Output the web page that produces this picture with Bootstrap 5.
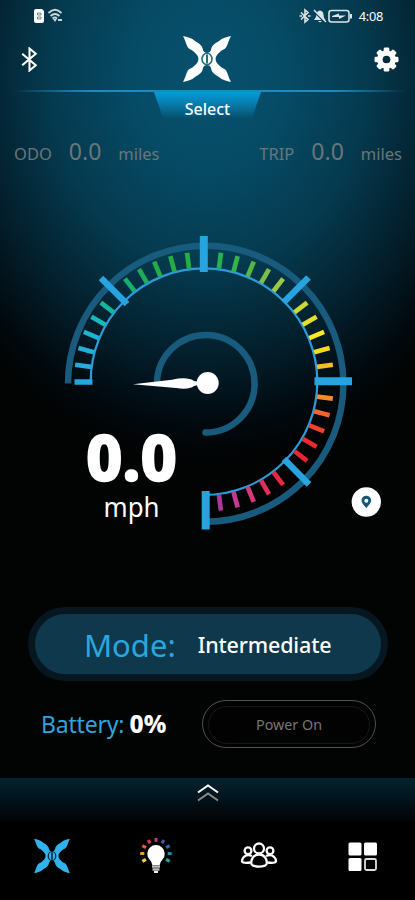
<!DOCTYPE html>
<html lang="en">
<head>
<meta charset="utf-8">
<meta name="viewport" content="width=device-width, initial-scale=1">
<title>Ride dashboard</title>
<link href="https://cdn.jsdelivr.net/npm/bootstrap@5.3.0/dist/css/bootstrap.min.css" rel="stylesheet">
<style>
body{background:#000;font-family:"Noto Sans","Open Sans",sans-serif;color:#fff}
.screen{width:415px;height:900px;background:radial-gradient(ellipse 315px 385px at 208px 75px,#07506d 0,#064c67 22%,#053a4f 50%,#031d29 75%,#010a0f 90%,#020303 100%)}
.screen svg{display:block;flex:none}
.status-row{height:32px;padding:0 32px 0 33px}
.clock{font-size:12.8px;letter-spacing:-.3px;line-height:32px}
.brand-row{height:58px;padding:0 16px 4px 20px}
.rule-line{height:2px;background:linear-gradient(90deg,transparent 3%,#1a8cc0 22%,#1a8cc0 80%,transparent 98%)}
.select-tab{width:107px;height:28px;line-height:34px;font-size:16px;font-weight:500;clip-path:polygon(0 0,100% 0,91% 100%,9% 100%);background:linear-gradient(#079bd8,#0782b6 35%,#065270 90%,#064c67)}
.trip-row{height:50px;padding:16px 13px 0 14px;color:#697779;line-height:32px}
.trip-group{gap:17px}
.unit-text{font-size:16.5px;line-height:35px}
.amount{font-size:23px;line-height:31px}
.gauge-wrap{height:437px}
.mode-pill{width:360px;height:74px;margin-left:28px;border:7px solid #07171f;border-radius:37px;background:#0f384d;padding-left:49px;gap:22px}
.mode-label{font-size:31px;color:#2ba6df;line-height:62px}
.mode-value{font-size:21.5px;line-height:61px;font-weight:500;letter-spacing:-.15px}
.power-row{height:48px;margin-top:19px;padding:0 39px 0 41px}
.batt-label{font-size:23px;color:#2ba6df;letter-spacing:-.2px}
.batt-value{font-size:24.5px;font-weight:800;letter-spacing:.2px;margin-left:1px}
.power-btn{width:174px;height:48px;border:1.5px solid #505050;border-radius:24px;padding:5px;background:#020202}
.power-inner{border:1px solid #181818;border-radius:19px;color:#777;font-size:14.3px;line-height:36px}
.drawer{height:44px;margin-top:30px;background:linear-gradient(#04222f,#03141d 45%,#030b10 70%,#030303)}
.tabs{height:78px;background:#000}
</style>
</head>
<body>
<svg width="0" height="0" class="d-none">
<symbol id="logo" viewBox="0 0 48 46"><g id="half" fill="currentColor"><path id="arm" d="M0 0C4 1 9 2 12 5C16 7.500 19.500 9.500 20 14Q21 17 24.200 17V23.200H15.500Q15.500 21 14 19C12 16.500 10 14.500 7 13.200C3.500 12 3 5 0 0Z"/><use href="#arm" transform="translate(48 0) scale(-1 1)"/></g><use href="#half" transform="translate(0 46) scale(1 -1)"/></symbol>
<symbol id="bt" viewBox="0 0 16 24"><path d="M1 6.500L14 17.500L8 22.500V1.500L14 6.500L1 17.500" fill="none" stroke="currentColor" stroke-width="2"/></symbol>
</svg>
<main class="screen d-flex flex-column overflow-hidden">
<div class="status-row d-flex align-items-center justify-content-between">
<svg width="32" height="16" viewBox="0 0 32 16"><path d="M3 1H9L11 3V13Q11 15 9 15H3Q1 15 1 13V3Q1 1 3 1Z" fill="#fff"/><path d="M4.500 5H8V7H4.500ZM4.500 9H8V11H4.500Z" fill="none" stroke="#6c8994"/><g fill="none" stroke="#c6d7dc" stroke-width="1.800"><path d="M15.500 5Q22 -1.500 28.500 5M17.500 8Q22 4 26.500 8M19.500 10.500Q22 8.500 24 10.500"/></g><path d="M20 11L24 11L22 14ZM25 11H29V13H25Z" fill="#c6d7dc"/></svg>
<div class="d-flex align-items-center">
<svg width="56" height="16" viewBox="0 0 56 16"><g fill="none" stroke="#dbe5e8" stroke-width="1.600"><path d="M2 4.500L9 11.500L6 14V2L9 4.500L2 11.500M.5 8H3M9 8H11.500"/><rect x="30" y="2.500" width="20" height="11.500" rx="2.500"/></g><path d="M15 12Q17.500 9.500 17.500 6Q18.500 2.500 21 2.500Q24.500 3 24.500 7Q24.500 10 26.500 12H15ZM19 13H23Q21 15.500 19 13Z" fill="#dbe5e8"/><path d="M15.500 4L26.500 15" stroke="#063b4f" stroke-width="1.500"/><path d="M15 2L27 14" stroke="#dbe5e8" stroke-width="1.500"/><path d="M33 8L40 5.500V7.500H47L40 11V9H33Z" fill="#dbe5e8"/><path d="M52 6V10.500" stroke="#dbe5e8" stroke-width="2"/></svg>
<span class="clock ms-1">4:08</span></div>
</div>
<div class="brand-row d-flex align-items-center justify-content-between">
<svg width="19" height="25"><use href="#bt"/></svg>
<svg width="50" height="48" viewBox="-1 -1 50 48"><use href="#logo" width="48" height="46"/><ellipse cx="24" cy="23" rx="5" ry="5.800" fill="#fff" stroke="#286a82" stroke-width="1.600"/><path d="M24 18.500V27.500" stroke="#286a82" stroke-width="2"/></svg>
<svg width="25" height="25" viewBox="-12 -12 24 24"><g fill="#fff"><circle r="9"/><g id="teeth"><rect x="-2.700" y="-11.500" width="5.400" height="23" rx="1.300"/><rect x="-11.500" y="-2.700" width="23" height="5.400" rx="1.300"/></g><use href="#teeth" transform="rotate(45)"/></g><circle r="3.700" fill="#052b3b"/></svg>
</div>
<div class="rule-line"></div>
<div class="select-tab align-self-center text-center">Select</div>
<div class="trip-row d-flex justify-content-between">
<div class="trip-group d-flex"><span class="unit-text">ODO</span><span class="amount">0.0</span><span class="unit-text">miles</span></div>
<div class="trip-group d-flex"><span class="unit-text">TRIP</span><span class="amount">0.0</span><span class="unit-text">miles</span></div>
</div>
<div class="gauge-wrap">
<svg width="415" height="437" viewBox="0 170 415 437">
<g fill="none" stroke="#195b7c"><path d="M68 383.500A137.700 138 0 1 1 205.500 521.700" stroke-width="6.500"/><path d="M157 383A48.800 48.800 0 1 1 205.500 432.500" stroke-width="6.500"/><circle cx="205.500" cy="432.500" r="3.200" fill="#195b7c" stroke="none"/></g>
<path d="M90.700 381.700A113.300 113.300 0 1 1 204 495" fill="none" stroke="#2a9cda" stroke-width="2.200"/>
<g id="ticks" stroke-width="4.700"></g>
<g stroke="#27a3df" stroke-width="8"><path d="M203.800 236V272M314.500 381.300H352"/><path d="M205.700 491V529.500"/><path d="M101 278L127 304M308.500 277.500L283.500 302.500M284 459L309 484.500" stroke-width="6.500"/><path d="M74.500 382H92.500" stroke-width="5.500"/></g>
<path d="M133 384.300L172 379.700Q188 376.500 194 381L207 383L194 386Q189 390 176 388Z" fill="#fff"/><circle cx="207.700" cy="383" r="11" fill="#fff"/>
<g fill="#fff"><text x="131.500" y="480.500" text-anchor="middle" font-size="64.500" font-weight="800" textLength="91" lengthAdjust="spacingAndGlyphs" stroke="#fff" stroke-width="1.600">0.0</text><text x="131.500" y="516.500" text-anchor="middle" font-size="27.500" textLength="56" lengthAdjust="spacingAndGlyphs">mph</text></g>
<circle cx="366.300" cy="502" r="14.700" fill="#fff"/><path d="M366.300 508Q361.500 503 361.500 500.500A4.800 4.800 0 0 1 371.100 500.500Q371 503 366.300 508Z" fill="#145579"/><circle cx="366.300" cy="500.800" r="2" fill="#fff"/>
</svg>
</div>
<div class="mode-pill d-flex"><span class="mode-label">Mode:</span><span class="mode-value">Intermediate</span></div>
<div class="power-row d-flex align-items-center justify-content-between"><div class="text-nowrap"><span class="batt-label">Battery:</span> <span class="batt-value">0%</span></div>
<div class="power-btn"><div class="power-inner text-center">Power On</div></div></div>
<div class="drawer d-flex justify-content-center"><svg width="24" height="30" viewBox="0 0 24 30" fill="none" stroke-width="2"><path d="M2 14.500L12 7.500L22 14.500" stroke="#fff"/><path d="M2 22.500L12 15.500L22 22.500" stroke="#8a8a8a"/></svg></div>
<nav class="tabs row g-0 row-cols-4">
<div class="col d-flex justify-content-center pt-3"><svg width="36" height="36" viewBox="0 0 48 46" color="#31b2ea"><use href="#logo" width="48" height="46"/><ellipse cx="24" cy="23" rx="5" ry="6" fill="#31b2ea" stroke="#04222f" stroke-width="1.600"/><path d="M24 18V28" stroke="#04222f" stroke-width="2"/></svg></div>
<div class="col d-flex justify-content-center pt-3"><svg width="36" height="38" viewBox="0 0 36 38"><path d="M14.300 27Q14 24 11.500 21.500A8.700 8.700 0 1 1 24.500 21.500Q22 24 21.700 27Z" fill="#fff"/><path d="M14 28.500H22M14.500 31.500H21.500" stroke="#bbb" stroke-width="2.400"/><path d="M16 34H20" stroke="#eee" stroke-width="2"/><g id="rays" stroke-width="3"></g></svg></div>
<div class="col d-flex justify-content-center pt-3"><svg width="38" height="36" viewBox="0 0 38 36" fill="none" stroke="#fff" stroke-width="2.300"><circle cx="19" cy="10.500" r="5"/><path d="M19 16.500Q14 16.500 12 21Q10 26.500 13 27.700Q19 29.500 25 27.700Q28 26.500 26 21Q24 16.500 19 16.500Z"/><circle cx="8" cy="12.800" r="3.400"/><circle cx="30" cy="12.800" r="3.400"/><path d="M12 18Q9 16.500 6 17.500Q2 19.500 2 23.500Q3 25.500 10.500 24.500M26 18Q29 16.500 32 17.500Q36 19.500 36 23.500Q35 25.500 27.500 24.500"/></svg></div>
<div class="col d-flex justify-content-center pt-3"><svg width="32" height="36" viewBox="0 0 32 36" fill="#fff"><rect x="1.500" y="4.500" width="13" height="13" rx="1.500"/><rect x="17" y="4.500" width="13" height="13" rx="1.500"/><rect x="1.500" y="20" width="13" height="13" rx="1.500"/><rect x="18" y="21" width="11" height="11" rx="1.500" fill="none" stroke="#ddd" stroke-width="1.800"/></svg></div>
</nav>
</main>
<script src="https://cdn.jsdelivr.net/npm/bootstrap@5.3.0/dist/js/bootstrap.bundle.min.js"></script>
<script>
function radial(id,cx,cy,r1,r2,list){
  let s='';
  list.forEach(([deg,color])=>{const a=deg*Math.PI/180,c=Math.cos(a),n=Math.sin(a);
    s+=`<path stroke="${color}" d="M${cx+c*r1} ${cy+n*r1}L${cx+c*r2} ${cy+n*r2}"/>`});
  document.getElementById(id).innerHTML=s;
}
const colors=['#27a9df','#20afd8','#1cb4cf','#19b8bd','#16b69e',null,'#17ae70','#1bae5c','#22ac4b','#24ac45','#25ad46',null,'#24b353','#32b54a','#53b748','#7abf47','#9bca46',null,'#c9d83b','#e5e02c','#fbe81f','#f9d820','#f5bd22',null,'#f58a2b','#f3652d','#ef432d','#ec2b2d','#eb2430',null,'#e92742','#e12f5e','#d8377b','#c53a91','#a93a9a'];
radial('ticks',204,381.7,114,130,colors.map((c,i)=>[180+(i+1)*7.5,c]).filter(t=>t[1]));
radial('rays',18,15.5,11.7,15.700,['#f1d637','#eb9e35','#ea5b3b','#e63353','#bc3a8a','#5156a2','#3465ae','#2387bc','#24a5a0'].map((c,i)=>[150+i*30,c]));
</script>
</body>
</html>
